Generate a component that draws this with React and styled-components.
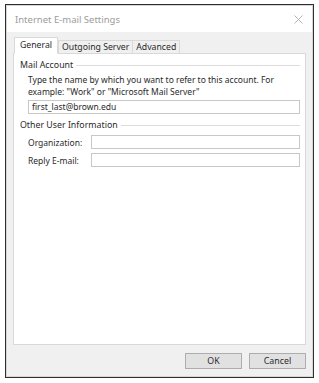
import styled, { createGlobalStyle } from "styled-components";

const Global = createGlobalStyle`
  html, body {
    margin: 0;
    background: #ffffff;
  }
  body {
    font-family: "Noto Sans", "Open Sans", sans-serif;
    color: #2a2a2a;
  }
`;

const Screen = styled.div`
  width: 319px;
  height: 383px;
  padding: 4px 0 0 5px;
  box-sizing: border-box;
`;

const Dialog = styled.div`
  width: 309px;
  height: 374px;
  box-sizing: border-box;
  border: 1px solid #2e2e2e;
  box-shadow: inset 0 0 0 1px #d6d6d6;
  background: #f0f0f0;
  display: flex;
  flex-direction: column;
`;

const TitleBar = styled.div`
  height: 25px;
  margin: 1px 1px 0;
  background: #ffffff;
  display: flex;
  align-items: center;
  justify-content: space-between;
  padding: 1px 9px 0 8px;
`;

const Title = styled.span`
  font-size: 9.5px;
  color: #9c9c9c;
`;

const Close = styled.svg`
  width: 9px;
  height: 9px;
  stroke: #b4b4b4;
  stroke-width: 1;
`;

const Body = styled.div`
  flex: 1;
  display: flex;
  flex-direction: column;
  padding: 5px 7px 8px 7px;
`;

const Tabs = styled.div`
  display: flex;
  align-items: flex-end;
  height: 17px;
  padding-left: 1px;
  margin-bottom: -1px;
  position: relative;
  z-index: 1;
`;

const Tab = styled.div`
  height: ${(p) => (p.active ? "17px" : "14px")};
  box-sizing: border-box;
  padding: 0 ${(p) => (p.active ? "5px" : "3px")};
  margin-right: ${(p) => (p.active ? "0" : "-1px")};
  background: ${(p) => (p.active ? "#ffffff" : "#f0f0f0")};
  border: 1px solid #d9d9d9;
  border-bottom: ${(p) => (p.active ? "1px solid #ffffff" : "1px solid #d9d9d9")};
  font-size: 8.7px;
  line-height: ${(p) => (p.active ? "14px" : "12px")};
  color: #2a2a2a;
`;

const Panel = styled.div`
  flex: 1;
  background: #ffffff;
  border: 1px solid #d9d9d9;
  padding: 4px 5px 0 6px;
  display: flex;
  flex-direction: column;
`;

const Group = styled.div`
  display: flex;
  align-items: center;
  gap: 3px;
  font-size: 8.8px;
  height: 14px;
`;

const GroupLine = styled.div`
  flex: 1;
  height: 1px;
  background: #dcdcdc;
  margin-top: 1px;
`;

const Indent = styled.div`
  padding-left: ${(p) => p.left || "8px"};
  margin-top: ${(p) => p.top || "0"};
  display: flex;
  flex-direction: column;
  gap: 2px;
`;

const Desc = styled.div`
  font-size: 8.5px;
  line-height: 12px;
  margin-top: 2px;
`;

const Input = styled.div`
  height: 14px;
  box-sizing: border-box;
  border: 1px solid #c8c8c8;
  background: #ffffff;
  font-size: 8.5px;
  line-height: 12px;
  padding-left: 3px;
  flex: 1;
`;

const Row = styled.div`
  display: flex;
  align-items: center;
  height: 14px;
  margin-bottom: 2px;
`;

const Label = styled.span`
  width: 63px;
  font-size: 8.5px;
`;

const Footer = styled.div`
  display: flex;
  justify-content: flex-end;
  gap: 7px;
  margin-top: 8px;
`;

const Button = styled.div`
  width: 57px;
  height: 16px;
  box-sizing: border-box;
  background: #e1e1e1;
  border: 1px solid #adadad;
  font-size: 8.8px;
  line-height: 14px;
  text-align: center;
  color: #2a2a2a;
`;

export default function App() {
  return (
    <Screen>
      <Global />
      <Dialog>
        <TitleBar>
          <Title>Internet E-mail Settings</Title>
          <Close viewBox="0 0 9 9">
            <line x1="0.5" y1="0.5" x2="8.5" y2="8.5" />
            <line x1="8.5" y1="0.5" x2="0.5" y2="8.5" />
          </Close>
        </TitleBar>
        <Body>
          <Tabs>
            <Tab active>General</Tab>
            <Tab>Outgoing Server</Tab>
            <Tab>Advanced</Tab>
          </Tabs>
          <Panel>
            <Group>
              Mail Account
              <GroupLine />
            </Group>
            <Indent left="8px">
              <Desc>
                Type the name by which you want to refer to this account. For
                <br />
                example: "Work" or "Microsoft Mail Server"
              </Desc>
              <Input>first_last@brown.edu</Input>
            </Indent>
            <Indent left="0" top="4px">
              <Group>
                Other User Information
                <GroupLine />
              </Group>
            </Indent>
            <Indent left="8px" top="3px">
              <Row>
                <Label>Organization:</Label>
                <Input />
              </Row>
              <Row>
                <Label>Reply E-mail:</Label>
                <Input />
              </Row>
            </Indent>
          </Panel>
          <Footer>
            <Button>OK</Button>
            <Button>Cancel</Button>
          </Footer>
        </Body>
      </Dialog>
    </Screen>
  );
}
